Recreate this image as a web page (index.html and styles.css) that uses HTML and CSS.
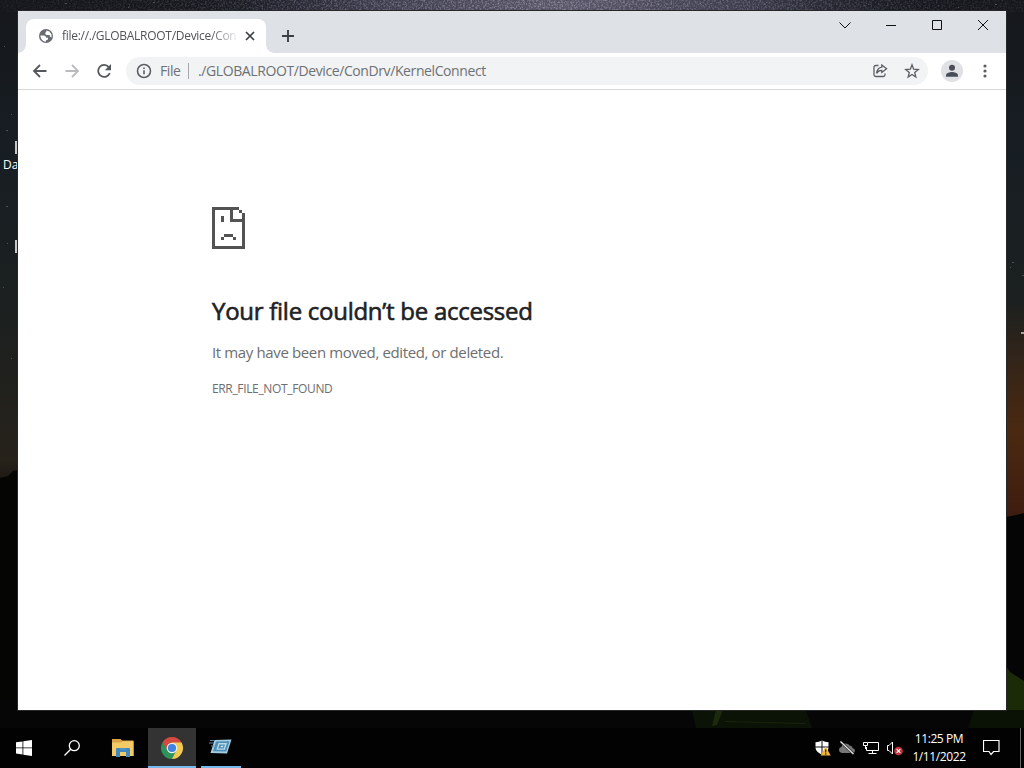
FILE: index.html
```html
<!DOCTYPE html>
<html lang="en">
<head>
    <meta charset="UTF-8">
    <meta name="viewport" content="width=device-width, initial-scale=1.0">
    <title>file://./GLOBALROOT/Device/ConDrv/KernelConnect</title>
    <link rel="stylesheet" href="styles.css">
</head>
<body>
    <div class="desktop">
        <svg class="wallpaper" viewBox="0 0 1024 768" aria-hidden="true">
            <defs>
                <linearGradient id="sky" x1="0" y1="0" x2="0" y2="1">
                    <stop offset="0" stop-color="#15171c"/>
                    <stop offset="0.2" stop-color="#171e23"/>
                    <stop offset="0.42" stop-color="#1c201f"/>
                    <stop offset="0.6" stop-color="#26221a"/>
                    <stop offset="0.63" stop-color="#1c1812"/>
                </linearGradient>
                <linearGradient id="glow" x1="0" y1="0" x2="0" y2="1">
                    <stop offset="0" stop-color="#4a2912" stop-opacity="0"/>
                    <stop offset="0.6" stop-color="#4a2912"/>
                    <stop offset="1" stop-color="#3d1c10"/>
                </linearGradient>
                <radialGradient id="milky">
                    <stop offset="0" stop-color="#5c596b"/>
                    <stop offset="0.5" stop-color="#3a3a4a"/>
                    <stop offset="1" stop-color="#1d1f28" stop-opacity="0"/>
                </radialGradient>
                <radialGradient id="fade">
                    <stop offset="0" stop-color="#fff"/>
                    <stop offset="1" stop-color="#fff" stop-opacity="0.1"/>
                </radialGradient>
                <mask id="grainMask"><ellipse cx="540" cy="4" rx="560" ry="60" fill="url(#fade)"/></mask>
                <filter id="grain" x="0" y="0" width="1" height="1">
                    <feTurbulence type="fractalNoise" baseFrequency="0.55" numOctaves="2" seed="4"/>
                    <feColorMatrix values="0 0 0 0 0.6  0 0 0 0 0.6  0 0 0 0 0.7  1.2 0 0 0 -0.5"/>
                </filter>
            </defs>
            <rect width="1024" height="768" fill="url(#sky)"/>
            <ellipse cx="560" cy="4" rx="400" ry="50" fill="url(#milky)"/>
            <g mask="url(#grainMask)"><rect width="1024" height="12" filter="url(#grain)"/></g>
            <rect x="1000" y="300" width="24" height="220" fill="url(#glow)"/>
            <path d="M0 478 8 476 13 471 18 470V768H0Z" fill="#050503"/>
            <path d="M1006 450 1016 448 1024 446V768H1006Z" fill="#050505" transform="translate(0 67)"/>
            <rect y="700" width="1024" height="68" fill="#050605"/>
            <path d="M1006 666 1010 672 1024 681V728H1000Z" fill="#1b2b08"/>
            <path d="M692 710H806L812 728H696Z" fill="#0b1206"/>
            <path d="M716 710H723L717 725 712 726Z" fill="#1c2a0b"/>
            <path d="M725 721 806 723V724L725 722Z" fill="#1a240b"/>
            <path d="M974 710H1024V728H968Z" fill="#0a1205"/>
            <g fill="#485158">
                <path d="M4 46h1v1H4zM11 114h1v1h-1zM7 243h1v1H7zM3 287h1v1H3zM11 358h1v1h-1zM1012 262h2v1h-2zM1010 267h1v1h-1zM1022 275h2v1h-2zM6 130h2v1H6zM6 206h2v1H6z"/>
                <path d="M65 3h2v1h-2zM153 2h2v1h-2zM128 7h1v1h-1zM866 3h1v1h-1zM995 4h2v1h-2zM958 7h1v1h-1z"/>
            </g>
            <path d="M1021 332h3v2h-3z" fill="#a7a39a"/>
            <path d="M15 141h3v13h-3zM15 240h3v13h-3z" fill="#c6c8c8"/>
        </svg>
        <span class="desktop-label">Da</span>

        <div class="window-area">
            <div class="window">
                <div class="tab-strip">
                    <div class="tab">
                        <svg class="favicon" viewBox="0 0 16 16">
                            <circle cx="8" cy="8" r="7" fill="#696c70"/>
                            <path d="M2.300 7.500H5.500Q8 7.500 8.300 9.800H10V11.500L8 12.300V13.700Q3 13.500 2.300 7.500ZM8.300 2.600 11.500 3.500 13.500 6.500V9.500L11.800 8.500V7H8.500L7.300 6V4.700L8.300 4Z" fill="#fff"/>
                        </svg>
                        <span class="tab-title">file://./GLOBALROOT/Device/Con</span>
                        <svg class="tab-close" viewBox="0 0 16 16"><path d="m4 4 8 8m0-8-8 8"/></svg>
                    </div>
                    <svg class="new-tab" viewBox="0 0 16 16"><path d="M8 2v12M2 8h12"/></svg>
                    <div class="window-controls">
                        <svg viewBox="0 0 46 28"><path d="m17.500 11.500 5.500 5.500 5.500-5.500"/></svg>
                        <svg viewBox="0 0 46 28"><path d="M18 14.500h10"/></svg>
                        <svg viewBox="0 0 46 28"><path d="M18.500 9.500h9v9h-9z"/></svg>
                        <svg viewBox="0 0 46 28"><path d="m18 9 10 10m0-10-10 10"/></svg>
                    </div>
                </div>

                <div class="toolbar">
                    <svg class="nav-icon" viewBox="0 0 32 32"><path d="M28.500 16H16m6-6L16 16l6 6"/></svg>
                    <svg class="nav-icon disabled" viewBox="0 0 32 32"><path d="M15.500 16H28m-6-6 6 6-6 6"/></svg>
                    <svg class="nav-icon" viewBox="0 0 32 32"><path d="M26.800 12.100A6 6 0 1 0 27.800 18"/><path d="M29 9v6.200h-6.200Z" fill="#55585c" stroke="none"/></svg>
                    <div class="omnibox">
                        <svg class="info" viewBox="0 0 16 16"><circle cx="8" cy="8" r="6.500"/><path d="M8 7.300v4M8 4.500v1.600"/></svg>
                        <span class="scheme">File</span>
                        <span class="divider"></span>
                        <span class="url">./GLOBALROOT/Device/ConDrv/KernelConnect</span>
                        <svg class="share" viewBox="0 0 16 16"><path d="M6.500 2.500H3.800Q2 2.500 2 4.300v7.400Q2 13.500 3.800 13.500h7.400Q13 13.500 13 11.700V10.500"/><path d="M9.800 2 14.600 5.700 9.800 9.500V7.300C7 7.300 5.600 8.400 4.600 10.400 5 7 6.500 4.500 9.800 4.100Z"/></svg>
                        <svg class="star" viewBox="0 0 16 16"><path d="m8 1.800 1.650 4.350 4.650.35-3.600 3 1.150 4.500L8 11.550 4.150 14l1.150-4.500-3.600-3 4.650-.35Z"/></svg>
                    </div>
                    <svg class="avatar" viewBox="0 0 22 22"><circle cx="11" cy="11" r="11" fill="#dfe1e5"/><circle cx="11" cy="7.700" r="3" fill="#484d59"/><path d="M5 16.800v-1.500c0-2.500 4-3.300 6-3.300s6 .8 6 3.300v1.500Z" fill="#484d59"/></svg>
                    <svg class="menu" viewBox="0 0 6 16"><circle cx="3" cy="3" r="1.600"/><circle cx="3" cy="8" r="1.600"/><circle cx="3" cy="13" r="1.600"/></svg>
                </div>

                <div class="page">
                    <svg class="sad-file" viewBox="0 0 11 14" shape-rendering="crispEdges">
                        <path d="M0 0h9v1h1v1h1v12H0ZM1 1v12h9V5H6V1ZM7 1v3h3V2H9V1ZM3 3h1v2H3ZM4 9h3v1H4ZM3 10h1v1H3ZM7 10h1v1H7Z" fill="#535353" fill-rule="evenodd"/>
                    </svg>
                    <h1>Your file couldn’t be accessed</h1>
                    <p>It may have been moved, edited, or deleted.</p>
                    <div class="error-code">ERR_FILE_NOT_FOUND</div>
                </div>
            </div>
        </div>

        <div class="taskbar">
            <div class="task">
                <svg width="16" height="16" viewBox="0 0 16 16"><path d="M0 2.300 6.500 1.400v6.100H0ZM7.300 1.300 16 0v7.500H7.300ZM0 8.300h6.500v6.200L0 13.600ZM7.300 8.300H16V16l-8.700-1.300Z" fill="#fff"/></svg>
            </div>
            <div class="task">
                <svg width="16" height="16" viewBox="0 0 16 16" fill="none" stroke="#fff" stroke-width="1.300"><circle cx="10.300" cy="5.700" r="5"/><path d="M6.700 9.300.5 15.500"/></svg>
            </div>
            <div class="task folder">
                <svg width="22" height="18" viewBox="0 0 22 18"><path d="M0 0h8.500l1.500 1.500h11.500V17H0Z" fill="#dca445"/><path d="M0 3.500 9 3.500 11 2.300H21.500V17H0Z" fill="#f2cb66"/><path d="M4 10q0-1 1-1h12q1 0 1 1v8h-4v-5H8v5H4Z" fill="#4088bd"/><path d="M8 9.500h6v1H8Z" fill="#5fa1cc"/></svg>
            </div>
            <div class="task active">
                <svg width="24" height="24" viewBox="0 0 24 24">
                    <path d="M12 12 2.470 6.500A11 11 0 0 1 21.530 6.500Z" fill="#d24a40"/>
                    <path d="M12 12 2.470 6.500A11 11 0 0 0 12 23Z" fill="#2c945a"/>
                    <path d="M12 12 12 23A11 11 0 0 0 21.530 6.500Z" fill="#f2ca52"/>
                    <path d="M2.470 6.500 7.700 14.500 12 12V6.500Z" fill="#d24a40"/>
                    <path d="M7.700 14.500 12 23 16.300 14.500Z" fill="#2c945a"/>
                    <path d="M12 6.500h9.530L16.300 14.500 12 12Z" fill="#f2ca52"/>
                    <circle cx="12" cy="12" r="5.300" fill="#f1f1f1"/><circle cx="12" cy="12" r="4.100" fill="#3f82df"/>
                </svg>
            </div>
            <div class="task running">
                <svg width="24" height="18" viewBox="0 0 24 18"><path d="m5.500 2 17-.5-4.500 14-16.500-.5Z" fill="#a5cde2"/><path d="m7 3.500 13.500-.3-3.300 10.300-13.200-.3Z" fill="#4e8db8"/><path d="m9.500 5 8.500-.1-2.200 6.900-8.500-.1Z" fill="#b9d9e8"/><path d="m10.500 6.500 5.500 0-1.300 4-5.500 0Z" fill="#4b8cb5"/><path d="m12 7.800 2.500 0-.5 1.500-2.500 0Z" fill="#cfe5ef"/><path d="M1 2.500h5M0 5h5M2 8h3" stroke="#5583a4"/></svg>
            </div>

            <div class="tray">
                <svg viewBox="0 0 16 16"><path d="M7 .5Q4 2.300.5 2.300V7C.5 11 3.500 13 7 14.500c3.500-1.500 6.500-3.500 6.500-7.500V2.300Q10 2.300 7 .5Z" fill="#fff"/><path d="M7 0v15M0 7h14" stroke="#111"/><path d="M10.700 6.500 15.700 15.500h-10Z" fill="#efb53c"/><path d="M10.700 9.500v3M10.700 13.300V14.700" stroke="#2c210b" stroke-width="1.200"/></svg>
                <svg viewBox="0 0 16 16"><path d="M3 13Q0 12.500 0 9.800 0 7.300 2.500 7 3 3.500 6.500 3.500q3 0 4.300 2.300Q13 5.600 13.500 8 16 8.500 16 10.800 16 13 13.500 13Z" fill="#777"/><path d="m1.500 1.500 13 12.500" stroke="#2a2a2a" stroke-width="2.500"/><path d="m1.500 1.500 13 12.500" stroke="#e5e5e5" stroke-width="1.200"/></svg>
                <svg viewBox="0 0 16 16" fill="none" stroke="#fff"><path d="M5 2.500h10.500v8H3.500V7M9.500 10.500v3M5.500 13.500h8M.5 2.500h4v3h-4ZM2.500 5.500V9"/></svg>
                <svg viewBox="0 0 16 16"><path d="M.5 5.500H2L5.500 2v12L2 10.500H.5Z" fill="none" stroke="#fff"/><circle cx="11.500" cy="11" r="4.300" fill="#c3343f"/><path d="m9.700 9.200 3.600 3.600m0-3.600-3.600 3.600" stroke="#fff" stroke-width="1.200"/></svg>
            </div>
            <div class="clock"><span>11:25 PM</span><span>1/11/2022</span></div>
            <svg class="action-center" viewBox="0 0 17 17"><path d="M.5 1.500h15.500v11h-5.500L8 15.500 6 12.500H.5Z"/></svg>
            <div class="show-desktop"></div>
        </div>
    </div>
</body>
</html>
```
FILE: styles.css
```css
* {
    margin: 0;
    padding: 0;
    box-sizing: border-box;
}

body {
    background: #050505;
    font-family: "Open Sans", "Noto Sans", sans-serif;
    overflow: hidden;
}

svg {
    display: block;
    flex-shrink: 0;
}

.desktop {
    position: relative;
    display: flex;
    flex-direction: column;
    width: 1024px;
    height: 768px;
}

.wallpaper {
    position: absolute;
    inset: 0;
    width: 1024px;
    height: 768px;
}

.desktop-label {
    position: absolute;
    left: 3px;
    top: 157px;
    color: #fff;
    font-size: 12px;
    line-height: 16px;
}

.window-area {
    position: relative;
    flex: 1;
    padding: 11px 18px 18px;
}

.window {
    display: flex;
    flex-direction: column;
    height: 699px;
    background: #fff;
    box-shadow: 0 0 0 1px #252729;
}

/* tabs */
.tab-strip {
    display: flex;
    height: 42px;
    padding-left: 8px;
    background: #dee1e6;
}

.tab {
    position: relative;
    display: flex;
    align-items: center;
    width: 240px;
    height: 34px;
    margin-top: 8px;
    padding: 0 8px 0 12px;
    background: #fff;
    border-radius: 8px 8px 0 0;
}

.tab::before,
.tab::after {
    content: "";
    position: absolute;
    bottom: 0;
    width: 8px;
    height: 8px;
}

.tab::before {
    left: -8px;
    background: radial-gradient(circle at 0 0, transparent 7.500px, #fff 8px);
}

.tab::after {
    right: -8px;
    background: radial-gradient(circle at 100% 0, transparent 7.500px, #fff 8px);
}

.favicon {
    width: 16px;
    height: 16px;
    margin-right: 8px;
}

.tab-title {
    flex: 1;
    white-space: nowrap;
    color: #505357;
    font-size: 12px;
    line-height: 16px;
    letter-spacing: -0.280px;
    padding-bottom: 1px;
    -webkit-mask-image: linear-gradient(to right, #000 148px, transparent 178px);
    mask-image: linear-gradient(to right, #000 148px, transparent 178px);
}

.tab-close {
    width: 16px;
    height: 16px;
    margin-left: 4px;
    stroke: #3c4043;
    stroke-width: 1.700;
}

.new-tab {
    width: 16px;
    height: 16px;
    margin: 17px 0 0 14px;
    stroke: #3c4043;
    stroke-width: 1.900;
}

.window-controls {
    display: flex;
    margin-left: auto;
}

.window-controls svg {
    width: 46px;
    height: 28px;
    fill: none;
    stroke: #111;
}

/* toolbar */
.toolbar {
    display: flex;
    align-items: center;
    height: 37px;
    border-bottom: 1px solid #d6d8db;
}

.nav-icon {
    width: 32px;
    height: 32px;
    fill: none;
    stroke: #55585c;
    stroke-width: 1.800;
}

.nav-icon.disabled {
    stroke: #b9bbbd;
}

.omnibox {
    display: flex;
    align-items: center;
    width: 802px;
    height: 28px;
    margin-left: 12px;
    padding: 0 8px 0 10px;
    background: #f1f3f4;
    border-radius: 14px;
    color: #6e7175;
    font-size: 14px;
    line-height: 18px;
}

.omnibox svg {
    width: 16px;
    height: 16px;
    fill: none;
    stroke: #5c5f64;
    stroke-width: 1.300;
}

.omnibox .info {
    stroke-width: 1.600;
}

.scheme {
    width: 28px;
    margin-left: 8px;
    padding-bottom: 1px;
    letter-spacing: -0.400px;
}

.divider {
    width: 1px;
    height: 16px;
    margin-right: 9px;
    background: #a5a8ac;
}

.url {
    padding-bottom: 1px;
    letter-spacing: -0.400px;
}

.omnibox .share {
    margin-left: auto;
}

.omnibox .star {
    margin-left: 16px;
}

.avatar {
    width: 22px;
    height: 22px;
    margin-left: 13px;
}

.menu {
    width: 6px;
    height: 16px;
    margin-left: 19px;
    fill: #5c5f64;
}

/* error page */
.page {
    padding: 117px 194px 0;
    color: #6e6e6e;
}

.sad-file {
    width: 33px;
    height: 42px;
}

.page h1 {
    margin-top: 47px;
    color: #202124;
    font-size: 24px;
    font-weight: 400;
    line-height: 30px;
    letter-spacing: -0.270px;
    white-space: nowrap;
    -webkit-text-stroke: 0.600px #202124;
}

.page p {
    margin-top: 14px;
    font-size: 15px;
    line-height: 24px;
    letter-spacing: -0.370px;
}

.error-code {
    margin-top: 17px;
    font-size: 12px;
    line-height: 16px;
    letter-spacing: -0.350px;
}

/* taskbar */
.taskbar {
    position: relative;
    display: flex;
    height: 40px;
    background: #020202;
}

.task {
    display: flex;
    align-items: center;
    justify-content: center;
    width: 48px;
    height: 40px;
}

.folder {
    width: 52px;
    padding-left: 1px;
}

.active {
    padding-top: 1px;
    background: #333;
    border-bottom: 2px solid #76b9ed;
}

.running {
    width: 40px;
    margin-left: 5px;
    border-bottom: 2px solid #76b9ed;
}

.tray {
    display: flex;
    align-items: center;
    gap: 8px;
    margin-left: auto;
}

.tray svg {
    width: 16px;
    height: 16px;
}

.clock {
    display: flex;
    flex-direction: column;
    align-items: center;
    width: 72px;
    padding-top: 2px;
    color: #fff;
    font-size: 12px;
    line-height: 18px;
    letter-spacing: -0.400px;
}

.action-center {
    width: 17px;
    height: 17px;
    margin: 11px 20px 0 8px;
    fill: none;
    stroke: #fff;
    stroke-width: 1.200;
}

.show-desktop {
    width: 4px;
    border-left: 1px solid #666;
}
```
